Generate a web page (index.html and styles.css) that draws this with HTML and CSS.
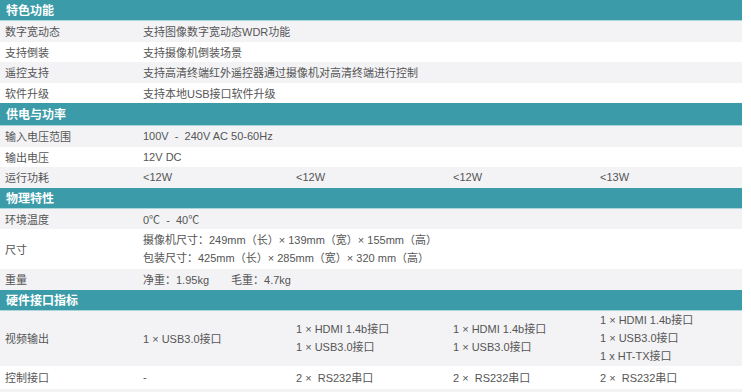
FILE: index.html
```html
<!DOCTYPE html>
<html lang="zh-CN">
<head>
<meta charset="utf-8">
<link rel="stylesheet" href="styles.css">
</head>
<body>
<div class="spec">
  <div class="sec">特色功能</div>
  <div class="row odd"><div class="c lab">数字宽动态</div><div class="c wide">支持图像数字宽动态WDR功能</div></div>
  <div class="row"><div class="c lab">支持倒装</div><div class="c wide">支持摄像机倒装场景</div></div>
  <div class="row odd"><div class="c lab">遥控支持</div><div class="c wide">支持高清终端红外遥控器通过摄像机对高清终端进行控制</div></div>
  <div class="row"><div class="c lab">软件升级</div><div class="c wide">支持本地USB接口软件升级</div></div>

  <div class="sec s2">供电与功率</div>
  <div class="row odd"><div class="c lab">输入电压范围</div><div class="c wide">100V &nbsp;-&nbsp; 240V AC 50-60Hz</div></div>
  <div class="row"><div class="c lab">输出电压</div><div class="c wide">12V DC</div></div>
  <div class="row odd"><div class="c lab">运行功耗</div><div class="c">&lt;12W</div><div class="c">&lt;12W</div><div class="c">&lt;12W</div><div class="c">&lt;13W</div></div>

  <div class="sec">物理特性</div>
  <div class="row odd"><div class="c lab">环境温度</div><div class="c wide">0℃ &nbsp;-&nbsp; 40℃</div></div>
  <div class="row tall2"><div class="c lab">尺寸</div><div class="c wide multi"><span>摄像机尺寸：249mm（长）× 139mm（宽）× 155mm（高）</span><span>包装尺寸：425mm（长）× 285mm（宽）× 320 mm（高）</span></div></div>
  <div class="row odd"><div class="c lab">重量</div><div class="c wide">净重：1.95kg<span class="gap"></span>毛重：4.7kg</div></div>

  <div class="sec">硬件接口指标</div>
  <div class="row odd tall3"><div class="c lab">视频输出</div><div class="c">1 × USB3.0接口</div><div class="c multi"><span>1 × HDMI 1.4b接口</span><span>1 × USB3.0接口</span></div><div class="c multi"><span>1 × HDMI 1.4b接口</span><span>1 × USB3.0接口</span></div><div class="c multi"><span>1 × HDMI 1.4b接口</span><span>1 × USB3.0接口</span><span>1 x HT-TX接口</span></div></div>
  <div class="row last"><div class="c lab">控制接口</div><div class="c">-</div><div class="c">2 × &nbsp;RS232串口</div><div class="c">2 × &nbsp;RS232串口</div><div class="c">2 × &nbsp;RS232串口</div></div>
  <div class="row odd"><div class="c lab">&nbsp;</div></div>
</div>
</body>
</html>
```

FILE: styles.css
```css
html, body {
  margin: 0;
  padding: 0;
  background: #ffffff;
}
body {
  font-family: "Liberation Sans", "Noto Sans CJK SC", sans-serif;
  font-size: 11px;
  color: #555555;
  overflow: hidden;
}
.spec {
  width: 742px;
}
.sec {
  height: 20px;
  line-height: 20px;
  background: #3c9ba8;
  border-bottom: 1px solid #a9d5db;
  color: #ffffff;
  font-weight: bold;
  font-size: 12px;
  padding-left: 6px;
  font-family: "Noto Sans CJK SC", sans-serif;
}
.sec.s2 {
  height: 22px;
  line-height: 22px;
}
.row {
  display: grid;
  grid-template-columns: 138px 153px 157px 147px 147px;
  height: 20.5px;
  align-items: center;
  background: #ffffff;
}
.row.odd {
  background: #f3f3f6;
}
.row.tall2 {
  height: 40px;
}
.row.tall3 {
  height: 55px;
}
.row.last {
  height: 23px;
}
.c {
  padding-left: 5px;
  white-space: nowrap;
}
.c.wide {
  grid-column: 2 / 6;
}
.multi {
  display: flex;
  flex-direction: column;
  line-height: 18px;
}
.gap {
  display: inline-block;
  width: 22px;
}
```
